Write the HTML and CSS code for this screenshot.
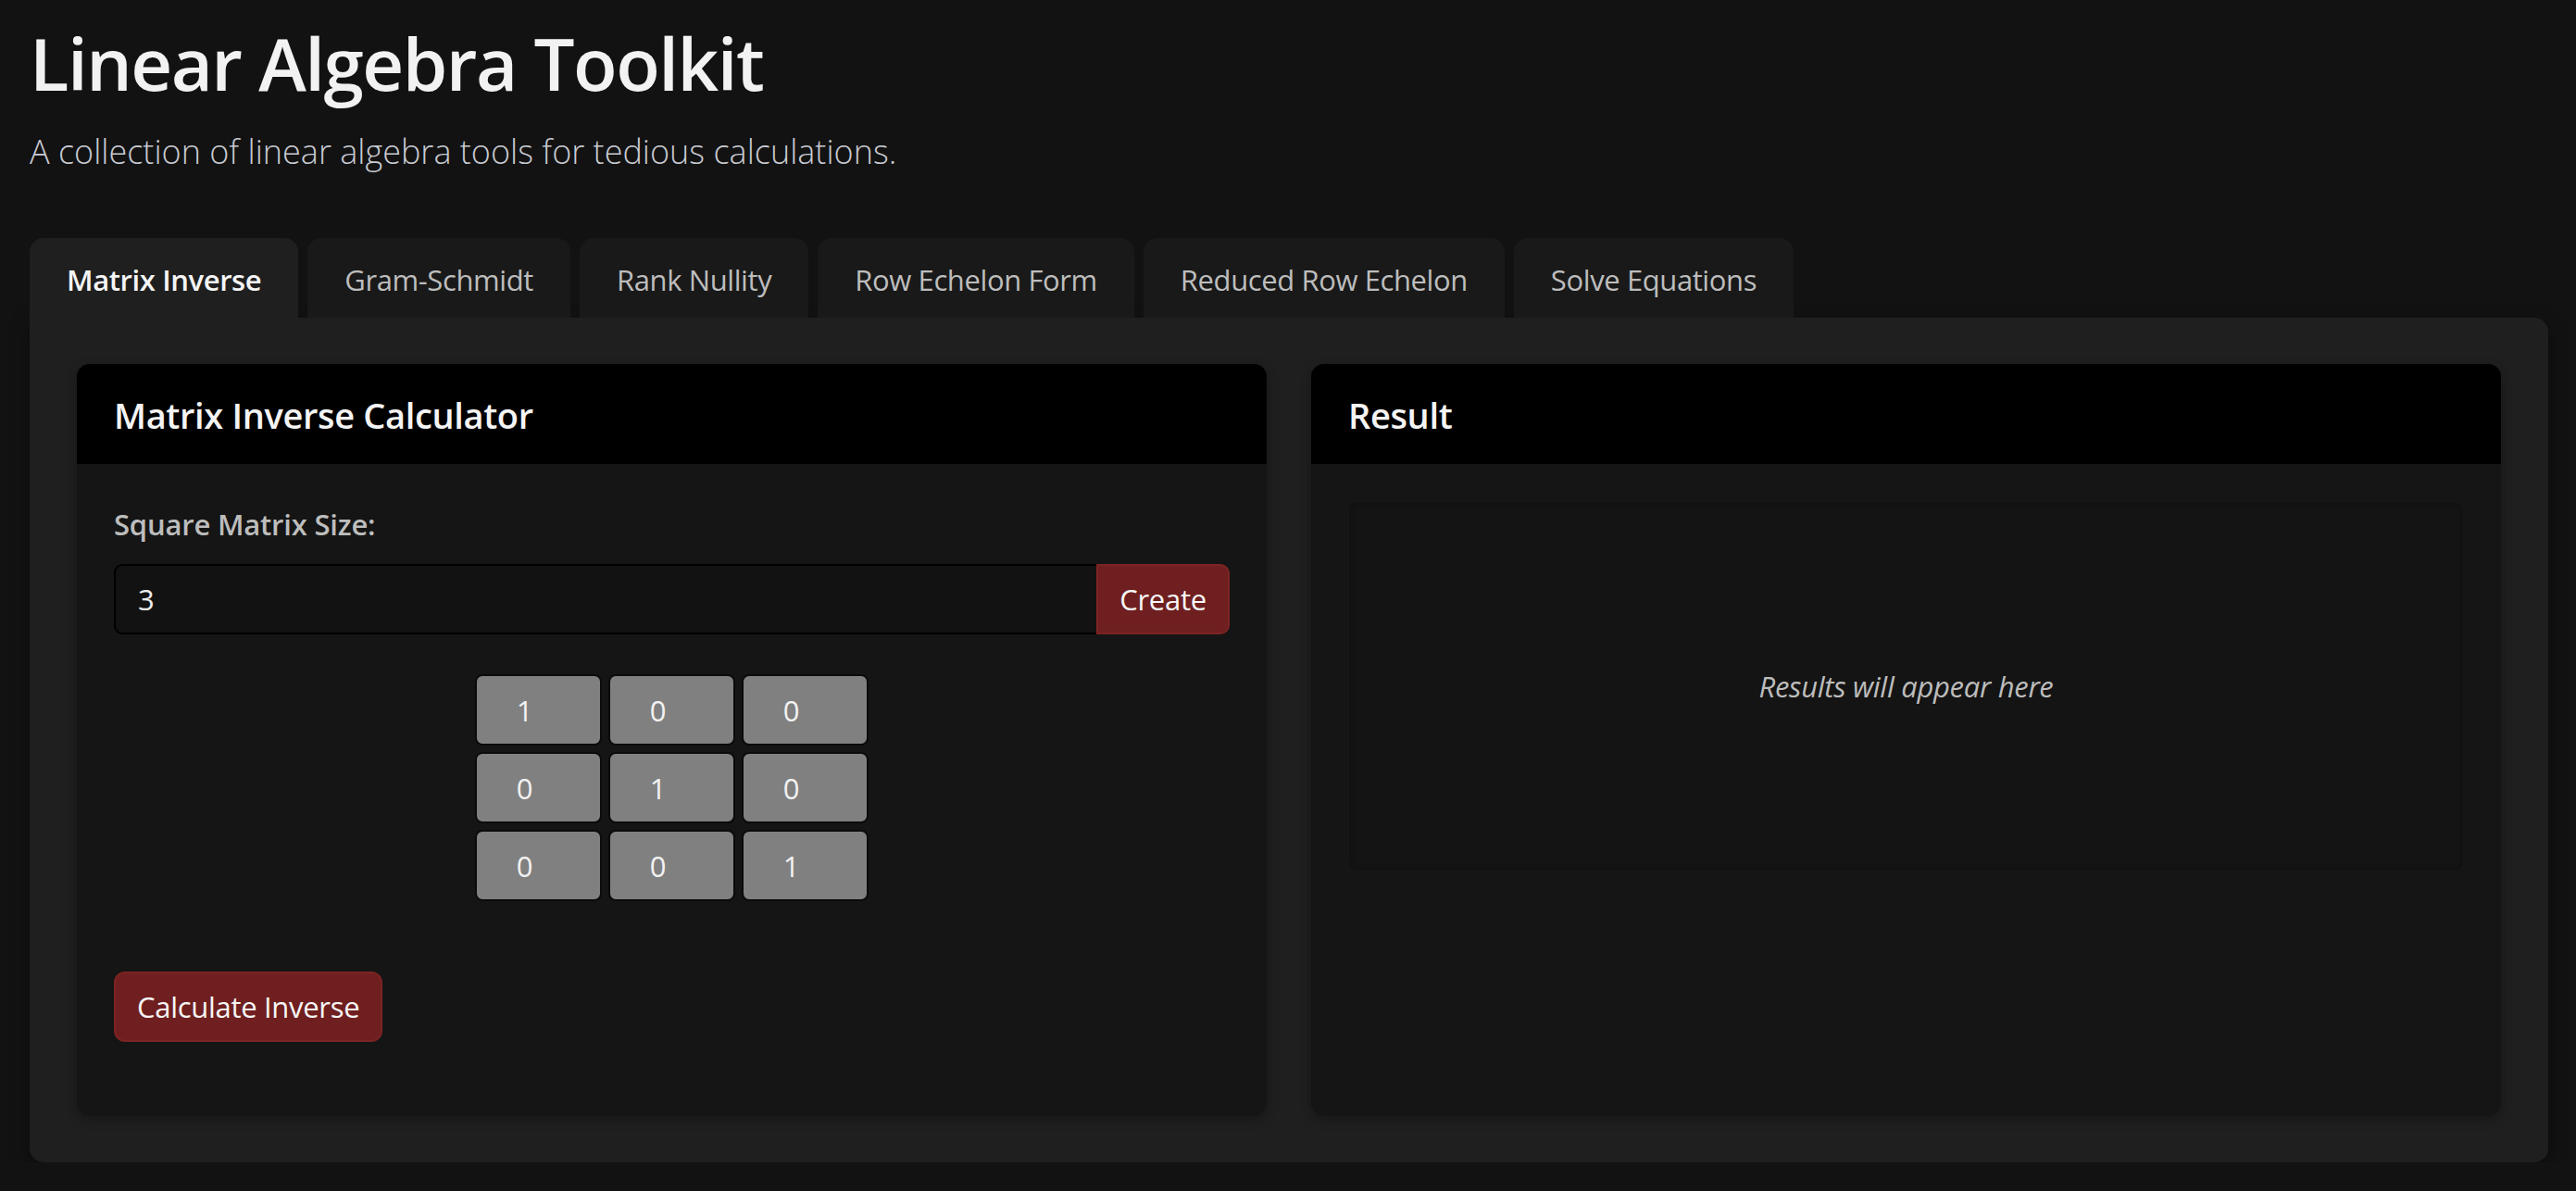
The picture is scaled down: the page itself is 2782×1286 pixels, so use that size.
FILE: index.html
```html
<!DOCTYPE html>
<html lang="en">
<head>
<meta charset="utf-8">
<title>Linear Algebra Toolkit</title>
<link rel="stylesheet" href="styles.css">
</head>
<body>
<div class="page">
  <header class="top">
    <h1 class="title">Linear Algebra Toolkit</h1>
    <p class="subtitle">A collection of linear algebra tools for tedious calculations.</p>
  </header>

  <nav class="tabs">
    <div class="tab active">Matrix Inverse</div>
    <div class="tab">Gram-Schmidt</div>
    <div class="tab">Rank Nullity</div>
    <div class="tab">Row Echelon Form</div>
    <div class="tab">Reduced Row Echelon</div>
    <div class="tab">Solve Equations</div>
  </nav>

  <main class="panel">
    <section class="card">
      <div class="card-head">Matrix Inverse Calculator</div>
      <div class="card-body calc-body">
        <label class="label">Square Matrix Size:</label>
        <div class="size-row">
          <input class="size-input" type="text" value="3">
          <button class="btn create">Create</button>
        </div>
        <div class="grid-wrap">
          <div class="matrix">
            <input class="cell" type="text" value="1">
            <input class="cell" type="text" value="0">
            <input class="cell" type="text" value="0">
            <input class="cell" type="text" value="0">
            <input class="cell" type="text" value="1">
            <input class="cell" type="text" value="0">
            <input class="cell" type="text" value="0">
            <input class="cell" type="text" value="0">
            <input class="cell" type="text" value="1">
          </div>
        </div>
        <button class="btn calc">Calculate Inverse</button>
      </div>
    </section>

    <section class="card">
      <div class="card-head">Result</div>
      <div class="card-body">
        <div class="result-box">
          <span class="placeholder">Results will appear here</span>
        </div>
      </div>
    </section>
  </main>
</div>
</body>
</html>
```

FILE: styles.css
```css
* { box-sizing: border-box; }

html, body {
  margin: 0;
  padding: 0;
  background: #121212;
}

body {
  font-family: "Open Sans", "Noto Sans", sans-serif;
  color: #e6e6e6;
}

.page {
  padding: 20px 30px 0 32px;
}

.title {
  margin: 0;
  font-size: 78px;
  line-height: 97px;
  letter-spacing: -1.5px;
  font-weight: 600;
  color: #f2f2f2;
}

.subtitle {
  margin: 22px 0 0 0;
  font-size: 36px;
  line-height: 50px;
  font-weight: 300;
  color: #c9cbd2;
}

.tabs {
  display: flex;
  gap: 10px;
  margin-top: 68px;
}

.tab {
  height: 86px;
  padding: 4px 40px 0;
  display: flex;
  align-items: center;
  background: #191919;
  color: #bdbdbd;
  font-size: 31px;
  letter-spacing: -0.4px;
  border-radius: 15px 15px 0 0;
  white-space: nowrap;
}

.tab.active {
  background: #1f1f1f;
  color: #f5f5f5;
  font-weight: 600;
}

.panel {
  background: #1f1f1f;
  border-radius: 0 15px 15px 15px;
  padding: 50px 51px 50px 51px;
  display: grid;
  grid-template-columns: 1fr 1fr;
  gap: 48px;
  box-shadow: 0 6px 20px rgba(0, 0, 0, 0.35);
}

.card {
  background: #151515;
  border-radius: 14px;
  overflow: hidden;
  box-shadow: 0 4px 12px rgba(0, 0, 0, 0.25);
}

.card-head {
  background: #000;
  height: 108px;
  padding: 2px 40px 0;
  display: flex;
  align-items: center;
  font-size: 38px;
  letter-spacing: -0.35px;
  font-weight: 600;
  color: #f4f4f4;
}

.card-body {
  padding: 40px;
}

.calc-body {
  padding-bottom: 80px;
}

.label {
  display: block;
  font-size: 31px;
  line-height: 50px;
  letter-spacing: -0.2px;
  font-weight: 600;
  color: #bdbdbd;
}

.size-row {
  display: flex;
  margin-top: 18px;
  height: 76px;
}

.size-input {
  flex: 1;
  min-width: 0;
  height: 76px;
  background: #121212;
  border: 2px solid #000;
  border-right: none;
  border-radius: 9px 0 0 9px;
  padding: 0 24px;
  font-family: inherit;
  font-size: 31px;
  color: #ececec;
  outline: none;
}

.btn {
  font-family: inherit;
  font-size: 31px;
  color: #f6f6f6;
  background: #6f1f1f;
  border: 2px solid #7d2323;
  cursor: pointer;
}

.create {
  width: 144px;
  height: 76px;
  border-radius: 0 10px 10px 0;
  padding: 0;
  letter-spacing: -0.3px;
}

.grid-wrap {
  display: flex;
  justify-content: center;
  margin-top: 43px;
}

.matrix {
  display: grid;
  grid-template-columns: repeat(3, 137px);
  grid-auto-rows: 77px;
  gap: 7px;
}

.cell {
  width: 137px;
  height: 77px;
  background: #808080;
  border: 2px solid #0b0b0b;
  border-radius: 8px;
  text-align: center;
  padding: 0 30px 0 0;
  font-family: inherit;
  font-size: 31px;
  color: #f2f2f2;
  outline: none;
}

.calc {
  display: block;
  margin-top: 76px;
  height: 76px;
  padding: 0 23px;
  letter-spacing: -0.3px;
  border-radius: 12px;
}

.result-box {
  height: 400px;
  background: #141414;
  border: 1px solid #171717;
  border-radius: 10px;
  box-shadow: inset 0 0 8px rgba(0, 0, 0, 0.25);
  display: flex;
  align-items: center;
  justify-content: center;
}

.placeholder {
  font-style: italic;
  font-size: 31px;
  letter-spacing: -0.3px;
  color: #bcbcbc;
}
```
